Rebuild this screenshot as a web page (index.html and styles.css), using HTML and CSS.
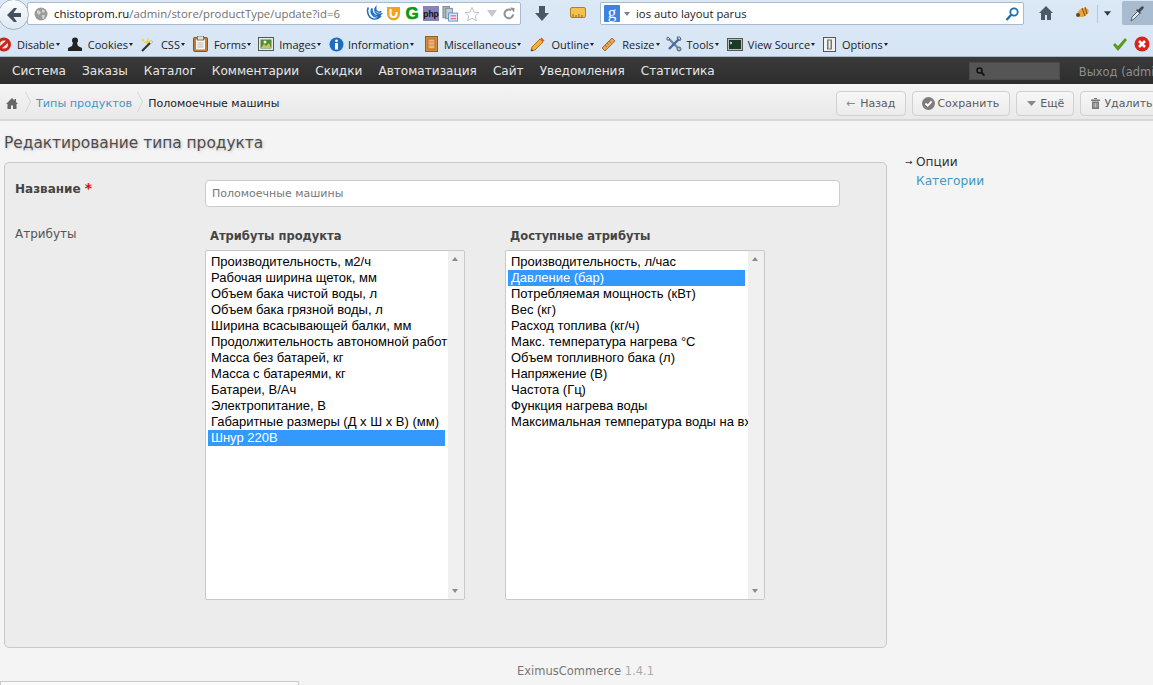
FILE: index.html
```html
<!DOCTYPE html>
<html lang="en">
<head>
    <meta charset="UTF-8">
    <title>Редактирование типа продукта</title>
    <link rel="stylesheet" href="styles.css">
</head>
<body>
    <header class="browser">
        <div class="navRow">
            <div class="backBtn">
                <svg width="16" height="16" viewBox="0 0 16 16"><path d="M8 1 1 8l7 7h3L7.500 10H15V6H7.500L11 1z" fill="#45505c"/></svg>
            </div>
            <div class="urlBar">
                <svg class="globe" width="14" height="14" viewBox="0 0 14 14"><circle cx="7" cy="7" r="6.500" fill="#9a9a9a"/><path d="M3 3l3 1 1 2-2 2-2-2zM8 2l3 2-1 2-2-1zM8 8l3 0-1 4-2-1z" fill="#d2d2d2"/></svg>
                <span class="urlText"><b>chistoprom.ru</b>/admin/store/productType/update?id=6</span>
                <span class="urlIcons">
                    <svg width="16" height="15" viewBox="0 0 17 15"><path d="M2.500 1C0 6 3 13 9 13.500c3 0 5.500-1.500 7-3.500-3 2-7.500 2-9.500-1.500C5 6 5 4 6.500 2 6 5 7 7.500 9.500 9c3 1.500 5 .5 6.500-1-3 .5-5.500-.5-6.500-3-.5-1.500 0-3 .8-4-.3 2 .5 3.500 2 4.500 1.500.8 3 .5 4-.5" fill="none" stroke="#1f6fc0" stroke-width="1.500"/></svg>
                    <svg class="iconU" width="15" height="14" viewBox="0 0 15 14"><path d="M1 0h13v7a6.500 6.500 0 0 1-13 0z" fill="#f5a31e"/><path d="M4.500 2v5a3 3 0 0 0 6 0V5" fill="none" stroke="#fff" stroke-width="2"/></svg>
                    <svg class="iconG" width="14" height="15" viewBox="0 0 14 15"><text x="7" y="13" class="gText" text-anchor="middle">G</text></svg>
                    <svg class="iconPhp" width="16" height="15" viewBox="0 0 16 15"><rect width="16" height="15" fill="#8583b8"/><text x="8" y="11" class="phpText" text-anchor="middle">php</text></svg>
                    <svg class="iconDoc" width="16" height="16" viewBox="0 0 17 16"><rect x="1" y="0" width="7" height="12" fill="#a8b4bf" stroke="#7d8a96"/><rect x="4" y="2" width="7" height="11" fill="#c3ccd4" stroke="#7d8a96"/><rect x="7" y="7" width="9.500" height="8.500" fill="#dcebfb" stroke="#5a8fcf"/><path d="M9 10h6M9 13h6" stroke="#d44"/></svg>
                    <svg class="iconStar" width="16" height="16" viewBox="0 0 17 16"><path d="M8.500 1l2.300 5 5.200.5-4 3.500 1.200 5.200-4.700-2.800-4.700 2.800L5 10 1 6.500 6.200 6z" fill="#fff" stroke="#b8bec4"/></svg>
                    <svg class="iconDrop" width="10" height="7" viewBox="0 0 10 7"><path d="M0 0h10L5 7z" fill="#c2c8ce"/></svg>
                    <svg class="iconReload" width="12" height="13" viewBox="0 0 13 13"><path d="M11 7.500A4.700 4.700 0 1 1 9 3" fill="none" stroke="#8d9296" stroke-width="2.200"/><path d="M7.500 0l5 .5-.5 5z" fill="#8d9296"/></svg>
                </span>
            </div>
            <svg class="toolDown" width="14" height="15" viewBox="0 0 14 15"><path d="M4 0h6v7h4l-7 8-7-8h4z" fill="#4d5761"/></svg>
            <svg class="toolRuler" width="16" height="12" viewBox="0 0 16 12"><rect x=".5" y=".5" width="15" height="10" rx="1.500" fill="#f2c14e" stroke="#a98428"/><path d="M3 11V7M6 11V8M9 11V7M12 11V8" stroke="#8d6d1c"/></svg>
            <div class="searchBar">
                <span class="googleIcon"><svg width="16" height="17" viewBox="0 0 16 17"><rect width="16" height="17" rx="1" fill="#3f83e0"/><text x="8" y="13" class="googleText" text-anchor="middle">g</text></svg></span>
                <svg class="searchDrop" width="6" height="4" viewBox="0 0 6 4"><path d="M0 0h6L3 4z" fill="#7a828a"/></svg>
                <span class="searchText">ios auto layout parus</span>
                <svg class="searchGo" width="14" height="14" viewBox="0 0 14 14"><circle cx="9" cy="5" r="3.700" fill="none" stroke="#1c6fb0" stroke-width="1.800"/><path d="M6.200 7.800 1.500 13" stroke="#1c6fb0" stroke-width="2.400"/></svg>
            </div>
            <svg class="toolHome" width="14" height="14" viewBox="0 0 14 14"><path d="M7 0 0 7h2v7h4V9h2v5h4V7h2z" fill="#4d5a66"/></svg>
            <svg class="toolBug" width="17" height="13" viewBox="0 0 15 13"><ellipse cx="8" cy="6.500" rx="6" ry="4" fill="#e8a33a" transform="rotate(-25 8 6.500)"/><circle cx="3" cy="9" r="2" fill="#5b4630"/><path d="M7 2l3 8M10 1l2 7" stroke="#7c4a1a"/></svg>
            <span class="toolSep"></span>
            <svg class="toolCaret" width="7" height="5" viewBox="0 0 8 5"><path d="M0 0h8L4 5z" fill="#333c44"/></svg>
            <div class="toolActive">
                <svg width="16" height="17" viewBox="0 0 16 17"><path d="M1 16l1-4 6-6 2 2-6 6z" fill="#e8edf2" stroke="#59636d"/><path d="M8 5l3-3c2-2 4 0 2 2l-3 3 1 1-1 1-4-4 1-1z" fill="#3f4850"/></svg>
            </div>
        </div>

        <div class="addonRow">
            <span class="addon addonFirst">
                <svg width="14" height="15" viewBox="0 0 14 15"><circle cx="7" cy="7.500" r="5.500" fill="#f6e3e0" stroke="#c9261c" stroke-width="3"/><path d="M2.500 11.500l9-8" stroke="#c9261c" stroke-width="3"/></svg>
                <span class="addonLabel">Disable</span>
            </span>
            <span class="addon">
                <svg width="14" height="14" viewBox="0 0 14 14"><circle cx="7" cy="3.500" r="3" fill="#222"/><path d="M5 6h4l1 3 4 2v3H0v-3l4-2z" fill="#222"/></svg>
                <span class="addonLabel">Cookies</span>
            </span>
            <span class="addon">
                <svg width="14" height="15" viewBox="0 0 14 15"><path d="M7 0l1.200 4L12 5 8.200 6.500 7 11 5.800 6.500 2 5l3.800-1zM2 1l.7 1.500L4 3l-1.300.5L2 5l-.7-1.500L0 3l1.300-.5z" fill="#f3d23c"/><path d="M1 14 11 4" stroke="#333" stroke-width="2.200"/><path d="M9 6l2-2" stroke="#eee" stroke-width="2.200"/></svg>
                <span class="addonLabel">CSS</span>
            </span>
            <span class="addon">
                <svg width="15" height="16" viewBox="0 0 15 16"><rect x=".5" y="1.500" width="14" height="14" rx="1" fill="#c47b34" stroke="#8c5520"/><rect x="3" y="3.500" width="9" height="10" fill="#f7f6f0"/><rect x="4.500" y="0" width="6" height="4" fill="#e2e2dc" stroke="#777"/><path d="M4.500 7h6M4.500 9h6M4.500 11h6" stroke="#bbb"/></svg>
                <span class="addonLabel">Forms</span>
            </span>
            <span class="addon">
                <svg width="16" height="14" viewBox="0 0 16 14"><rect x=".5" y=".5" width="15" height="13" fill="#ecece6" stroke="#555"/><rect x="2.500" y="2.500" width="11" height="9" fill="#4d8b39"/><path d="M3 11l3-4 2 2 3-3 2 5z" fill="#c9c46a"/><circle cx="7" cy="5" r="1.500" fill="#f7f3d0"/></svg>
                <span class="addonLabel">Images</span>
            </span>
            <span class="addon">
                <svg width="15" height="15" viewBox="0 0 15 15"><circle cx="7.500" cy="7.500" r="7" fill="#1d6cc0"/><circle cx="7.500" cy="3.800" r="1.400" fill="#fff"/><rect x="6" y="6" width="3" height="6.500" fill="#fff"/></svg>
                <span class="addonLabel">Information</span>
            </span>
            <span class="addon">
                <svg width="13" height="16" viewBox="0 0 13 16"><rect x=".5" y=".5" width="12" height="15" fill="#d88a3a" stroke="#9a5c1c"/><rect x="3" y="3" width="7" height="10" fill="#edb878" stroke="#b0702c"/><path d="M3 6h7M3 9h7" stroke="#c78a48"/></svg>
                <span class="addonLabel">Miscellaneous</span>
            </span>
            <span class="addon">
                <svg width="15" height="15" viewBox="0 0 15 15"><path d="M1 14l1-4 8-8 3 3-8 8z" fill="#f2b33d" stroke="#b26a1c"/><path d="M10 2l1.500-1.500 3 3L13 5z" fill="#e06040"/><path d="M1 14l1-2 1 2z" fill="#333"/></svg>
                <span class="addonLabel">Outline</span>
            </span>
            <span class="addon">
                <svg width="15" height="15" viewBox="0 0 15 15"><path d="M1 11 11 1l3 3L4 14z" fill="#e0a45a" stroke="#a96f2a"/><path d="M4 8l2 2M6 6l1.500 1.500M8 4l2 2" stroke="#a96f2a"/></svg>
                <span class="addonLabel">Resize</span>
            </span>
            <span class="addon">
                <svg width="16" height="16" viewBox="0 0 16 16"><path d="M3 3l10 10" stroke="#7b8794" stroke-width="2.400"/><path d="M13 3 3 13" stroke="#3d6ea8" stroke-width="2.400"/><path d="M1 4V1.500L2 1l2 2-1 1zM11 1h3l1 3-3 .5z" fill="none" stroke="#5a6570"/><circle cx="13" cy="13" r="2" fill="#9fb4c8" stroke="#5a6570"/></svg>
                <span class="addonLabel">Tools</span>
            </span>
            <span class="addon">
                <svg width="16" height="13" viewBox="0 0 16 13"><rect x=".5" y=".5" width="15" height="12" fill="#bbb" stroke="#555"/><rect x="2" y="2" width="12" height="9" fill="#1d3a24"/><path d="M3 4l2 1-2 1" fill="none" stroke="#bfe"/></svg>
                <span class="addonLabel">View Source</span>
            </span>
            <span class="addon">
                <svg width="13" height="15" viewBox="0 0 13 15"><rect x=".5" y=".5" width="12" height="14" fill="#f2f2ee" stroke="#555"/><rect x="4" y="2.500" width="5" height="10" fill="#777"/><rect x="5.500" y="3.500" width="2" height="8" fill="#eee"/></svg>
                <span class="addonLabel">Options</span>
            </span>
            <span class="addonStatus">
                <svg width="15" height="13" viewBox="0 0 15 13"><path d="M1 7l2-2 3 3 7-8 2 2-9 11z" fill="#5c9a1e"/></svg>
                <svg width="16" height="16" viewBox="0 0 16 16"><circle cx="8" cy="8" r="7.500" fill="#d8221a"/><path d="M5 5l6 6M11 5l-6 6" stroke="#fff" stroke-width="2.600"/></svg>
            </span>
        </div>
    </header>

    <nav class="mainMenu">
        <ul class="menuList">
            <li>Система</li>
            <li>Заказы</li>
            <li>Каталог</li>
            <li>Комментарии</li>
            <li>Скидки</li>
            <li>Автоматизация</li>
            <li>Сайт</li>
            <li>Уведомления</li>
            <li>Статистика</li>
        </ul>
        <div class="menuSearch">
            <svg width="9" height="9" viewBox="0 0 9 9"><circle cx="3.500" cy="3.500" r="2.500" fill="none" stroke="#111" stroke-width="1.500"/><path d="M5.500 5.500 8.500 8.500" stroke="#111" stroke-width="1.800"/></svg>
        </div>
        <span class="menuExit">Выход (admin)</span>
    </nav>

    <div class="crumbBar">
        <svg class="crumbHome" width="12" height="11" viewBox="0 0 12 11"><path d="M6 0 0 6h1.500v5H5V7.500h2V11h3.500V6H12L10 4V1H8.500v1.500z" fill="#666"/></svg>
        <svg class="crumbSep" width="6" height="20" viewBox="0 0 6 20"><path d="M.5 0 5.500 10 .5 20" fill="none" stroke="#d4d4d4"/></svg>
        <a class="crumbLink">Типы продуктов</a>
        <svg class="crumbSep" width="6" height="20" viewBox="0 0 6 20"><path d="M.5 0 5.500 10 .5 20" fill="none" stroke="#d4d4d4"/></svg>
        <span class="crumbCurrent">Поломоечные машины</span>
        <div class="crumbButtons">
            <button class="btn btnBack"><span class="btnArrow">←</span>Назад</button>
            <button class="btn btnSave">
                <svg width="13" height="13" viewBox="0 0 13 13"><circle cx="6.500" cy="6.500" r="6.500" fill="#7d7d7d"/><path d="M3.500 6.500l2.200 2.200 4-4.400" fill="none" stroke="#fff" stroke-width="1.800"/></svg>
                Сохранить
            </button>
            <button class="btn">
                <svg width="9" height="5" viewBox="0 0 9 5"><path d="M0 0h9L4.500 5z" fill="#888"/></svg>
                Ещё
            </button>
            <button class="btn">
                <svg width="9" height="11" viewBox="0 0 9 11"><path d="M0 1.500h9V3H0zM3 0h3v1H3zM1 3.500h7V11H1z" fill="#777"/><path d="M3 5v4.500M4.500 5v4.500M6 5v4.500" stroke="#eee" stroke-width=".6"/></svg>
                Удалить
            </button>
        </div>
    </div>

    <main class="page">
        <section class="content">
            <h1 class="pageTitle">Редактирование типа продукта</h1>
            <div class="formBox">
                <div class="formRow">
                    <label class="formLabel formLabelBold">Название <span class="required">*</span></label>
                    <input class="formInput" type="text" value="Поломоечные машины">
                </div>
                <div class="formRow attrRow">
                    <label class="formLabel">Атрибуты</label>
                    <div class="attrCols">
                        <div class="attrCol">
                            <h4 class="attrTitle">Атрибуты продукта</h4>
                            <div class="listBox">
                                <ul class="listItems">
                                    <li>Производительность, м2/ч</li>
                                    <li>Рабочая ширина щеток, мм</li>
                                    <li>Объем бака чистой воды, л</li>
                                    <li>Объем бака грязной воды, л</li>
                                    <li>Ширина всасывающей балки, мм</li>
                                    <li>Продолжительность автономной работы, ч</li>
                                    <li>Масса без батарей, кг</li>
                                    <li>Масса с батареями, кг</li>
                                    <li>Батареи, В/Ач</li>
                                    <li>Электропитание, В</li>
                                    <li>Габаритные размеры (Д х Ш х В) (мм)</li>
                                    <li class="selected">Шнур 220В</li>
                                </ul>
                                <div class="scrollTrack"><i class="arrowUp"></i><i class="arrowDown"></i></div>
                            </div>
                        </div>
                        <div class="attrCol">
                            <h4 class="attrTitle">Доступные атрибуты</h4>
                            <div class="listBox">
                                <ul class="listItems">
                                    <li>Производительность, л/час</li>
                                    <li class="selected">Давление (бар)</li>
                                    <li>Потребляемая мощность (кВт)</li>
                                    <li>Вес (кг)</li>
                                    <li>Расход топлива (кг/ч)</li>
                                    <li>Макс. температура нагрева °C</li>
                                    <li>Объем топливного бака (л)</li>
                                    <li>Напряжение (В)</li>
                                    <li>Частота (Гц)</li>
                                    <li>Функция нагрева воды</li>
                                    <li>Максимальная температура воды на входе</li>
                                </ul>
                                <div class="scrollTrack"><i class="arrowUp"></i><i class="arrowDown"></i></div>
                            </div>
                        </div>
                    </div>
                </div>
            </div>
            <footer class="pageFooter">EximusCommerce <span class="version">1.4.1</span></footer>
        </section>
        <aside class="sideMenu">
            <a class="sideItem sideActive"><span class="sideArrow">→</span>Опции</a>
            <a class="sideItem">Категории</a>
        </aside>
    </main>

    <div class="bottomPanel"></div>
</body>
</html>
```

FILE: styles.css
```css
* {
    margin: 0;
    padding: 0;
    box-sizing: border-box;
}

html, body {
    height: 685px;
    overflow: hidden;
}

body {
    background-color: #f4f4f4;
    font-family: "DejaVu Sans", sans-serif;
    position: relative;
}

ul {
    list-style: none;
}

/* browser chrome */
.browser {
    height: 57px;
    background: linear-gradient(#dbe8f6, #d6e5f5);
    font-family: "Open Sans", sans-serif;
    border-bottom: 1px solid #a9b8c6;
}

.navRow {
    height: 30px;
    display: flex;
    align-items: flex-start;
    position: relative;
}

.backBtn {
    position: absolute;
    left: -2px;
    top: -1px;
    width: 31px;
    height: 31px;
    padding-left: 1px;
    border-radius: 50%;
    background: linear-gradient(#fbfdff, #dfe8f1);
    border: 1px solid #a3b3c3;
    display: flex;
    align-items: center;
    justify-content: center;
    z-index: 1;
}

.urlBar {
    width: 494px;
    height: 23px;
    margin: 2px 0 0 27px;
    padding-left: 6px;
    background: #fff;
    border: 1px solid #a8bace;
    border-radius: 2px;
    display: flex;
    align-items: center;
    font-size: 11.4px;
    color: #6f6f6f;
    flex-shrink: 0;
}

.globe {
    margin-right: 6px;
    flex-shrink: 0;
}

.urlText {
    flex: 1;
    white-space: nowrap;
}

.urlText b {
    font-weight: 400;
    color: #111;
}

.urlIcons {
    display: flex;
    align-items: center;
    padding-right: 5px;
}

.urlIcons svg, .googleIcon svg {
    overflow: visible;
}

.iconU {
    margin-left: 4px;
}

.iconG {
    margin-left: 4px;
}

.gText {
    font-family: "Liberation Sans", sans-serif;
    font-size: 17px;
    font-weight: 700;
    fill: #0a9a12;
    stroke: #0a9a12;
    stroke-width: .6;
}

.iconPhp {
    margin-left: 4px;
}

.phpText {
    font-family: "Liberation Sans", sans-serif;
    font-size: 8.500px;
    font-weight: 700;
    fill: #111;
}

.iconDoc {
    margin-left: 3px;
}

.iconStar {
    margin-left: 6px;
}

.iconDrop {
    margin-left: 7px;
}

.iconReload {
    margin-left: 6px;
}

.toolDown {
    margin: 6px 0 0 14px;
}

.toolRuler {
    margin: 7px 0 0 21px;
}

.searchBar {
    width: 424px;
    height: 23px;
    margin: 2px 0 0 14px;
    padding: 0 3px;
    background: #fff;
    border: 1px solid #a8bace;
    border-radius: 2px;
    display: flex;
    align-items: center;
    font-size: 11.3px;
    color: #222;
    flex-shrink: 0;
}

.googleIcon {
    display: flex;
}

.googleText {
    font-family: "Liberation Serif", serif;
    font-size: 17px;
    fill: #fff;
}

.searchDrop {
    margin-left: 4px;
}

.searchText {
    flex: 1;
    margin-left: 6px;
}

.searchGo {
    margin-right: 1px;
}

.toolHome {
    margin: 6px 0 0 15px;
}

.toolBug {
    margin: 6px 0 0 21px;
}

.toolSep {
    width: 1px;
    height: 18px;
    margin: 5px 0 0 6px;
    background: #b9c6d3;
}

.toolCaret {
    margin: 11px 0 0 6px;
}

.toolActive {
    width: 31px;
    height: 24px;
    margin: 1px 0 0 11px;
    background: #a9bccf;
    border-radius: 2px 0 0 2px;
    display: flex;
    align-items: center;
    justify-content: center;
    flex-shrink: 0;
}

.addonRow {
    height: 26px;
    display: flex;
    align-items: center;
    font-size: 11px;
    color: #1c1c1c;
    padding-top: 2px;
}

.addon {
    display: flex;
    align-items: center;
    margin-right: 8px;
    flex-shrink: 0;
}

.addonFirst {
    margin-left: -3px;
}

.addonLabel {
    margin-left: 6px;
    position: relative;
    padding-right: 5px;
}

.addonLabel::after {
    content: "";
    position: absolute;
    right: 0;
    top: 6px;
    border-left: 2.500px solid transparent;
    border-right: 2.500px solid transparent;
    border-top: 3px solid #222;
}

/* the add-on buttons are not evenly spaced */
.addon:nth-child(4) { margin-right: 7px; }
.addon:nth-child(5) .addonLabel { margin-left: 5px; }
.addon:nth-child(6) { margin-right: 11px; }
.addon:nth-child(6) .addonLabel { margin-left: 4px; }
.addon:nth-child(7) { margin-right: 9px; }
.addon:nth-child(8) { margin-right: 7px; }
.addon:nth-child(9) { margin-right: 6px; }
.addon:nth-child(10) { margin-right: 8px; }
.addon:nth-child(10) .addonLabel { margin-left: 5px; }
.addon:nth-child(11) { margin-right: 8px; }
.addon:nth-child(11) .addonLabel { margin-left: 5px; }

.addonStatus {
    margin-left: auto;
    margin-right: 3px;
    display: flex;
    align-items: center;
    gap: 7px;
}

/* admin menu */
.mainMenu {
    height: 27px;
    background: linear-gradient(#3b3b3b, #2c2c2c);
    display: flex;
    align-items: center;
    overflow: hidden;
    white-space: nowrap;
}

.menuList {
    display: flex;
    gap: 16px;
    padding: 1px 0 0 12px;
    color: #e6e6e6;
    font-size: 12.1px;
    flex-shrink: 0;
}

.menuSearch {
    width: 91px;
    height: 18px;
    margin: 1px 0 0 254px;
    padding-left: 6px;
    background: #555;
    border: 1px solid #4a4a4a;
    display: flex;
    align-items: center;
    flex-shrink: 0;
}

.menuExit {
    margin: 2px 0 0 19px;
    color: #8e8e8e;
    font-size: 11.5px;
    flex-shrink: 0;
}

/* breadcrumbs */
.crumbBar {
    height: 37px;
    padding: 3px 0 0 6px;
    background: linear-gradient(#f4f4f4, #e9e9e9);
    border-bottom: 2px solid #d6d6d2;
    display: flex;
    align-items: center;
    font-size: 11px;
    white-space: nowrap;
    overflow: hidden;
}

.crumbSep {
    margin: -2px 5px 0;
    flex-shrink: 0;
}

.crumbHome {
    margin-right: 2px;
}

.crumbLink {
    font-size: 11.2px;
    color: #3f97c4;
}

.crumbCurrent {
    color: #222;
}

.crumbButtons {
    position: absolute;
    left: 836px;
    top: 91px;
    display: flex;
    gap: 6px;
}

.btn {
    height: 25px;
    padding: 0 9px 0 10px;
    display: flex;
    align-items: center;
    gap: 4px;
    background: linear-gradient(#f7f7f7, #ebebeb);
    border: 1px solid #d0d0d0;
    border-radius: 4px;
    color: #5c5c5c;
    font-family: "DejaVu Sans", sans-serif;
    font-size: 11px;
    white-space: nowrap;
    flex-shrink: 0;
}

.btnBack {
    padding: 0 10px 0 9px;
    gap: 5px;
}

.btnSave {
    padding: 0 10px 0 9px;
    gap: 2px;
}

.btnArrow {
    color: #888;
}

/* page */
.page {
    display: flex;
    padding-left: 4px;
}

.content {
    width: 883px;
    flex-shrink: 0;
}

.pageTitle {
    height: 41px;
    padding-top: 12px;
    color: #4c4c4c;
    font-size: 15.4px;
    font-weight: 400;
    line-height: 20px;
    text-shadow: 1px 1px 3px #c4c4c4;
}

.formBox {
    height: 486px;
    background: #ececec;
    border: 1px solid #c8c8c8;
    border-radius: 5px;
    padding: 17px 46px 0 10px;
}

.formRow {
    display: flex;
}

.formLabel {
    width: 190px;
    flex-shrink: 0;
    color: #555;
    font-size: 12px;
}

.formLabelBold {
    padding-top: 2px;
    font-weight: 700;
    color: #444;
}

.required {
    color: #f00;
    font-size: 14px;
    line-height: 12px;
}

.formInput {
    width: 635px;
    height: 27px;
    padding: 0 6px;
    background: #fff;
    border: 1px solid #ccc;
    border-radius: 4px;
    color: #777;
    font-family: "DejaVu Sans", sans-serif;
    font-size: 11px;
}

.attrRow {
    margin-top: 19px;
}

.attrRow .formLabel {
    padding-top: 1px;
}

.attrCols {
    display: flex;
    gap: 40px;
}

.attrCol {
    width: 260px;
}

.attrTitle {
    height: 24px;
    padding: 3px 0 0 5px;
    color: #444;
    font-size: 11.5px;
    font-weight: 700;
}

.listBox {
    height: 350px;
    display: flex;
    background: #fff;
    border: 1px solid #c8c8c8;
    border-radius: 2px;
}

.listItems {
    width: 242px;
    padding: 3px 0 0 2px;
    overflow: hidden;
    font-family: "Liberation Sans", sans-serif;
    font-size: 13px;
    line-height: 16px;
    color: #000;
    white-space: nowrap;
}

.listItems li {
    width: 237px;
    padding-left: 3px;
}

.listItems .selected {
    background: #3399ff;
    color: #fff;
}

.scrollTrack {
    flex: 1;
    background: #f0f0f0;
    position: relative;
}

.arrowUp, .arrowDown {
    position: absolute;
    left: 4px;
    border-left: 3.500px solid transparent;
    border-right: 3.500px solid transparent;
}

.arrowUp {
    top: 6px;
    border-bottom: 4px solid #8a8a8a;
}

.arrowDown {
    bottom: 6px;
    border-top: 4px solid #8a8a8a;
}

.pageFooter {
    padding: 16px 0 0 513px;
    color: #777;
    font-size: 11.5px;
}

.version {
    color: #aaa;
}

.sideMenu {
    padding: 34px 0 0 18px;
    font-size: 12.2px;
    display: flex;
    flex-direction: column;
    gap: 4px;
    position: relative;
}

.sideItem {
    padding-left: 11px;
    line-height: 15px;
    color: #3f97c4;
    position: relative;
}

.sideActive {
    color: #333;
}

.sideArrow {
    position: absolute;
    left: 0;
    font-size: 9px;
}

.bottomPanel {
    position: absolute;
    left: 0;
    top: 681px;
    width: 299px;
    height: 10px;
    background: #fafafa;
    border: 1px solid #ccc;
}
```
